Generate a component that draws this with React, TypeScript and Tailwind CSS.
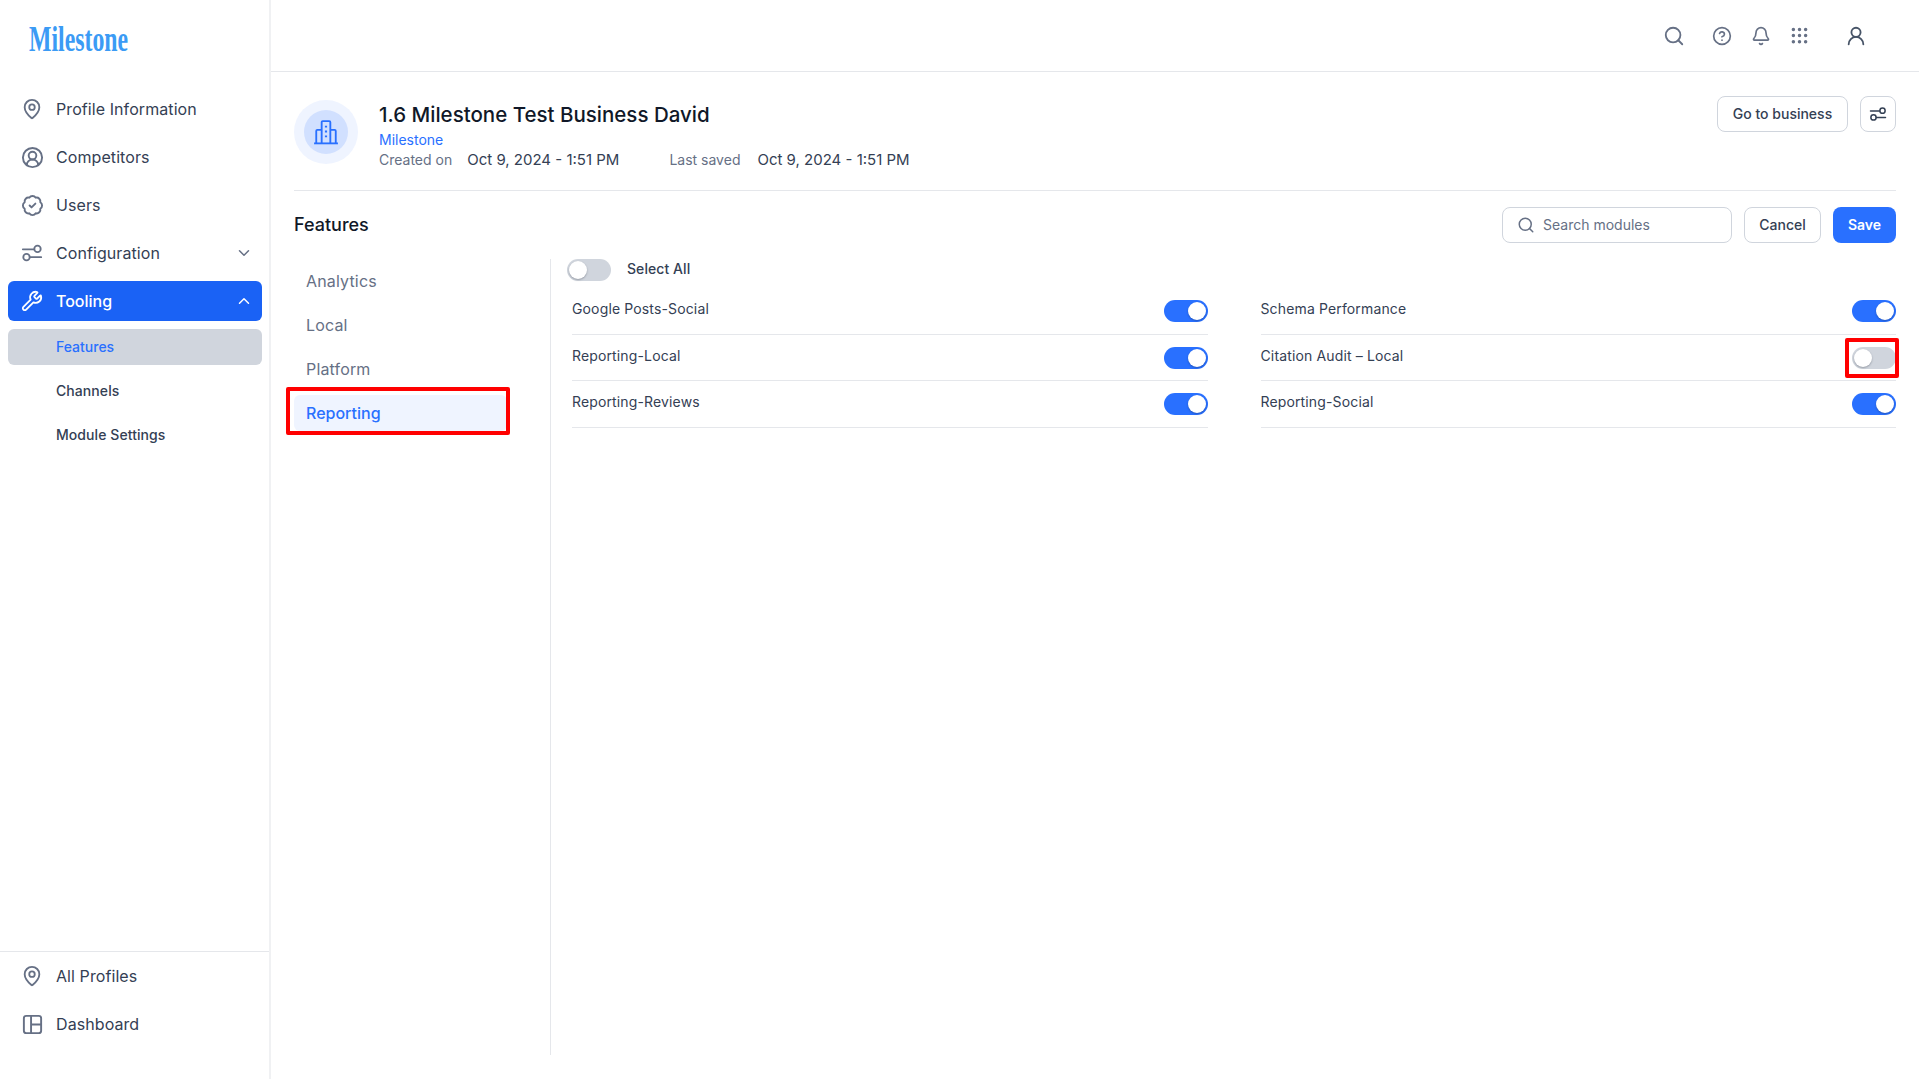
import { Bell, ChevronDown, ChevronUp, CircleHelp, CircleUserRound, Grip, MapPin, Search, UserRound, Wrench, BadgeCheck } from "lucide-react";

const SlidersIcon = ({ className }: any) => (
    <svg viewBox="0 0 24 24" fill="none" stroke="currentColor" strokeWidth="2" strokeLinecap="round" className={className}>
        <path d="M2 8h12" />
        <circle cx="18" cy="7.5" r="3.5" />
        <circle cx="6" cy="16.5" r="3.5" />
        <path d="M10 16.5h12" />
    </svg>
);

const DashboardIcon = ({ className }: any) => (
    <svg viewBox="0 0 24 24" fill="none" stroke="currentColor" strokeWidth="2" className={className}>
        <rect x="3" y="3" width="18" height="18" rx="2.5" />
        <path d="M10.5 3v18M10.5 12H21" />
    </svg>
);

const OfficeIcon = ({ className }: any) => (
    <svg viewBox="0 0 24 24" fill="none" stroke="currentColor" strokeWidth="1.7" className={className}>
        <path d="M1 22.5h22" />
        <path d="M8 22.5V3a1 1 0 0 1 1-1h6a1 1 0 0 1 1 1v19.5" />
        <path d="M8 10H4a1 1 0 0 0-1 1v11.5M16 10h4a1 1 0 0 1 1 1v11.5" />
        <path d="M11 7h2M11 11.5h2M11 16h2" />
    </svg>
);

const Toggle = ({ on }: any) => (
    <div className={`flex h-[22px] w-11 shrink-0 items-center rounded-full px-[2px] ${on ? "justify-end bg-[#2970ff]" : "justify-start bg-[#d0d5dd]"}`}>
        <div className="h-[18px] w-[18px] rounded-full bg-white shadow-[0_1px_2px_rgba(16,24,40,0.3)]"></div>
    </div>
);

const NavItem = ({ icon, label, right }: any) => (
    <div className="flex h-10 items-center rounded-md pl-[13px] pr-[9px] text-base tracking-[0.005em] text-[#344054]">
        <span className="flex w-[35px] text-[#667085]">{icon}</span>
        <span className="flex-1">{label}</span>
        {right}
    </div>
);

const Row = ({ label, on, marked }: any) => (
    <div className="flex h-[46.5px] items-start justify-between border-b border-[#e5e7eb] pt-3">
        <span className="text-sm leading-[18px] tracking-[0.01em] text-[#344054]">{label}</span>
        <div className="relative">
            <Toggle on={on} />
            {marked && <span className="absolute -left-[7px] -top-[9px] h-10 w-[54px] rounded-[2px] border-4 border-[#ff0000]"></span>}
        </div>
    </div>
);

export default function App() {
    return (
        <div className="flex h-screen w-full overflow-hidden bg-white font-['Inter',sans-serif]">
            <aside className="flex w-[271px] shrink-0 flex-col border-r-2 border-[#f0f1f3]">
                <div className="flex h-[89px] shrink-0 items-start pl-[29px] pt-[18px]">
                    <div className="origin-left scale-x-[0.68] whitespace-nowrap font-['Liberation_Serif',serif] text-[35px] font-bold leading-[44px] text-[#3b9bf5]">Milestone</div>
                </div>
                <nav className="flex flex-col gap-2 pl-2 pr-[7px]">
                    <NavItem label="Profile Information" icon={<MapPin size={22} strokeWidth={2} />} />
                    <NavItem label="Competitors" icon={<CircleUserRound size={23} strokeWidth={2} />} />
                    <NavItem label="Users" icon={<BadgeCheck size={23} strokeWidth={2} />} />
                    <NavItem label="Configuration" icon={<SlidersIcon className="h-[22px] w-[22px]" />} right={<ChevronDown size={18} className="text-[#667085]" />} />
                    <div className="flex h-10 items-center rounded-md bg-[#1a62f5] pl-[13px] pr-[9px] text-base font-medium text-white">
                        <span className="flex w-[35px]"><Wrench size={22} strokeWidth={2} /></span>
                        <span className="flex-1">Tooling</span>
                        <ChevronUp size={18} />
                    </div>
                    <div className="flex h-9 items-center rounded-md bg-[#d0d5dd] pl-12 text-sm font-medium text-[#2970ff]">Features</div>
                    <div className="flex h-9 items-center rounded-md pl-12 text-sm font-medium tracking-[0.005em] text-[#344054]">Channels</div>
                    <div className="flex h-9 items-center rounded-md pl-12 text-sm font-medium tracking-[0.005em] text-[#344054]">Module Settings</div>
                </nav>
                <div className="mt-auto mb-[35px] flex flex-col gap-2 border-t border-[#e5e7eb] pl-2 pr-[7px] pt-1">
                    <NavItem label="All Profiles" icon={<MapPin size={22} strokeWidth={2} />} />
                    <NavItem label="Dashboard" icon={<DashboardIcon className="h-[23px] w-[23px]" />} />
                </div>
            </aside>

            <main className="flex min-w-0 flex-1 flex-col">
                <header className="flex h-[72px] shrink-0 items-center justify-end border-b border-[#e5e7eb] pr-[52px] text-[#667085]">
                    <Search size={22} />
                    <CircleHelp size={20} className="ml-[27px]" />
                    <Bell size={20} className="ml-[19px]" />
                    <Grip size={21} className="ml-[18px]" />
                    <UserRound size={22} className="ml-[35px] text-[#475467]" />
                </header>

                <div className="flex min-h-0 flex-1 flex-col pb-6 pl-[23px] pr-[23px]">
                    <div className="flex h-[119px] shrink-0 items-start border-b border-[#e5e7eb] pt-[28px]">
                        <div className="flex h-16 w-16 items-center justify-center rounded-full bg-[#eff4ff]">
                            <div className="flex h-11 w-11 items-center justify-center rounded-full bg-[#d1e0ff] text-[#2970ff]">
                                <OfficeIcon className="h-[26px] w-[26px]" />
                            </div>
                        </div>
                        <div className="ml-[21px] flex-1">
                            <div className="text-[20.5px] font-medium leading-[30px] text-[#101828]">1.6 Milestone Test Business David</div>
                            <div className="text-sm leading-5 text-[#2970ff]">Milestone</div>
                            <div className="flex items-baseline leading-5">
                                <span className="text-sm text-[#667085]">Created on</span>
                                <span className="ml-[15px] text-[15px] text-[#344054]">Oct 9, 2024 - 1:51 PM</span>
                                <span className="ml-[50px] text-sm text-[#667085]">Last saved</span>
                                <span className="ml-[17px] text-[15px] text-[#344054]">Oct 9, 2024 - 1:51 PM</span>
                            </div>
                        </div>
                        <div className="flex items-center gap-3">
                            <button className="-mt-1 h-9 w-[131px] rounded-lg border border-[#d0d5dd] bg-white text-sm font-medium text-[#344054]">Go to business</button>
                            <button className="-mt-1 flex h-9 w-9 items-center justify-center rounded-lg border border-[#d0d5dd] bg-white text-[#344054]">
                                <SlidersIcon className="h-[18px] w-[18px]" />
                            </button>
                        </div>
                    </div>

                    <div className="flex h-[68px] shrink-0 items-center justify-between">
                        <h2 className="text-lg font-medium text-[#101828]">Features</h2>
                        <div className="flex items-center gap-3">
                            <div className="flex h-9 w-[230px] items-center gap-2 rounded-lg border border-[#d0d5dd] bg-white px-[14px] text-sm text-[#667085]">
                                <Search size={18} />
                                <span>Search modules</span>
                            </div>
                            <button className="h-9 w-[77px] rounded-lg border border-[#d0d5dd] bg-white text-sm font-medium text-[#344054]">Cancel</button>
                            <button className="h-9 w-[63px] rounded-lg bg-[#2970ff] text-sm font-semibold text-white">Save</button>
                        </div>
                    </div>

                    <div className="flex min-h-0 flex-1">
                        <div className="flex w-[257px] shrink-0 flex-col gap-2 border-r border-[#e5e7eb] pt-[4px] pr-[43px]">
                            <div className="flex h-9 items-center pl-3 text-base tracking-[0.01em] text-[#667085]">Analytics</div>
                            <div className="flex h-9 items-center pl-3 text-base tracking-[0.01em] text-[#667085]">Local</div>
                            <div className="flex h-9 items-center pl-3 text-base tracking-[0.01em] text-[#667085]">Platform</div>
                            <div className="relative flex h-9 items-center rounded-md bg-[#eff4ff] pl-3 text-base font-medium text-[#2970ff]">
                                Reporting
                                <span className="absolute -left-[8px] -right-[3px] -top-[8px] -bottom-[4px] rounded-[2px] border-4 border-[#ff0000]"></span>
                            </div>
                        </div>
                        <div className="min-w-0 flex-1 pl-4">
                            <div className="flex h-[22px] items-center">
                                <Toggle on={false} />
                                <span className="-mt-[2px] ml-4 text-sm font-medium tracking-[0.005em] text-[#344054]">Select All</span>
                            </div>
                            <div className="mt-[7px] grid grid-cols-2 gap-x-[53px] pl-[5px]">
                                <Row label="Google Posts-Social" on />
                                <Row label="Schema Performance" on />
                                <Row label="Reporting-Local" on />
                                <Row label="Citation Audit – Local" on={false} marked />
                                <Row label="Reporting-Reviews" on />
                                <Row label="Reporting-Social" on />
                            </div>
                        </div>
                    </div>
                </div>
            </main>
        </div>
    );
}
